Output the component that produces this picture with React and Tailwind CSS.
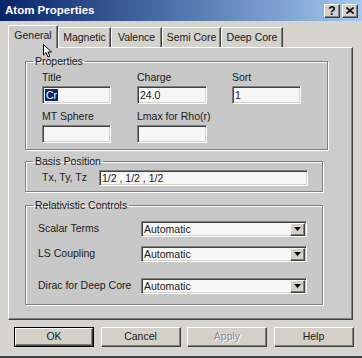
import React from "react";

const sunken =
  "border-t border-l border-t-[#808080] border-l-[#808080] border-b border-r border-b-white border-r-white shadow-[inset_1px_1px_0_#404040,inset_-1px_-1px_0_#d4d0c8]";
const raised =
  "border-t border-l border-t-white border-l-white border-b border-r border-b-[#404040] border-r-[#404040] shadow-[inset_-1px_-1px_0_#808080]";
const etched =
  "border border-[#808080] shadow-[1px_1px_0_#fff,inset_1px_1px_0_#fff]";

const tabs = [
  { label: "General", w: "w-[50px]", active: true },
  { label: "Magnetic", w: "w-[53px]" },
  { label: "Valence", w: "w-[51px]" },
  { label: "Semi Core", w: "w-[59px]" },
  { label: "Deep Core", w: "w-[62px]" },
];

function TextBox({ value, className = "", selected = false }) {
  return (
    <div className={`${sunken} bg-[#f6f6f6] flex items-center pl-[2px] ${className}`}>
      {selected ? (
        <span className="bg-[#0a246a] text-white leading-[12px] px-[1px]">{value}</span>
      ) : (
        <span className="leading-[12px]">{value}</span>
      )}
    </div>
  );
}

function Combo({ value }) {
  return (
    <div className={`${sunken} bg-[#f6f6f6] w-[166px] h-[16px] flex items-center justify-between pl-[2px] pr-[1px]`}>
      <span className="leading-[12px]">{value}</span>
      <div className={`${raised} bg-[#d4d0c8] w-[15px] h-[13px] flex items-center justify-center`}>
        <svg width="7" height="4" viewBox="0 0 7 4">
          <path d="M0 0h7L3.5 4z" fill="#000" />
        </svg>
      </div>
    </div>
  );
}

function Group({ title, className = "", children }) {
  return (
    <fieldset className={`${etched} ml-[16px] w-[298px] bg-[#c8c8c8] ${className}`}>
      <legend className="ml-[7px] px-[2px] leading-[13px]">{title}</legend>
      {children}
    </fieldset>
  );
}

function Button({ label, isDefault = false, disabled = false }) {
  const inner = (
    <div
      className={`${raised} bg-[#d4d0c8] h-full flex items-center justify-center ${
        disabled ? "text-[#8a8a8a] [text-shadow:1px_1px_0_#fff]" : "text-[#1a1a1a]"
      }`}
    >
      {label}
    </div>
  );
  return isDefault ? (
    <div className="w-[80px] h-[20px] border border-black">{inner}</div>
  ) : (
    <div className="w-[80px] h-[20px]">{inner}</div>
  );
}

export default function App() {
  return (
    <div
      className="relative w-[362px] h-[358px] overflow-hidden bg-[#d6d4cf] text-[10.5px] text-[#1a1a1a] flex flex-col border-b-2 border-[#404040]"
      style={{ fontFamily: '"Liberation Sans", Arial, sans-serif' }}
    >
      <div className="h-[21px] flex items-center justify-between pl-[5px] pr-[4px] bg-gradient-to-r from-[#0a246a] to-[#a6caf0]">
        <span className="text-white font-bold text-[11.5px]">Atom Properties</span>
        <div className="flex gap-[2px]">
          <div className={`${raised} bg-[#d4d0c8] w-[16px] h-[14px] flex items-center justify-center font-bold text-[12px] leading-none text-black`}>
            ?
          </div>
          <div className={`${raised} bg-[#d4d0c8] w-[16px] h-[14px] flex items-center justify-center`}>
            <svg width="8" height="7" viewBox="0 0 8 7">
              <path d="M0.5 0.5L7.5 6.5M7.5 0.5L0.5 6.5" stroke="#000" strokeWidth="1.6" />
            </svg>
          </div>
        </div>
      </div>

      <div className="pl-[8px] pt-[4px]">
        <div className="flex items-end h-[22px]">
          {tabs.map((t) =>
            t.active ? (
              <div
                key={t.label}
                className={`${t.w} h-[23px] -mb-px relative z-10 bg-[#cccccc] border-t border-l border-white border-r border-r-[#404040] shadow-[inset_-1px_0_0_#808080] rounded-tl-[2px] flex items-center justify-center pb-[2px]`}
              >
                {t.label}
              </div>
            ) : (
              <div
                key={t.label}
                className={`${t.w} h-[20px] bg-[#d4d2cc] border-t border-l border-white border-r border-r-[#404040] shadow-[inset_-1px_0_0_#808080] rounded-tl-[2px] flex items-center justify-center`}
              >
                {t.label}
              </div>
            )
          )}
        </div>

        <div className="w-[345px] h-[273px] bg-[#cccccc] border-t border-l border-white border-r border-b border-r-[#404040] border-b-[#404040] shadow-[inset_-1px_-1px_0_#808080] pt-[7px]">
          <Group title="Properties">
            <div className="grid grid-cols-[95px_95px_95px] pl-[16px] pt-[3px] pb-[6px]">
              <div className="leading-[13px]">Title</div>
              <div className="leading-[13px]">Charge</div>
              <div className="leading-[13px]">Sort</div>
              <TextBox value="Cr" selected className="w-[69px] h-[18px] mt-[2px]" />
              <TextBox value="24.0" className="w-[70px] h-[18px] mt-[2px]" />
              <TextBox value="1" className="w-[69px] h-[18px] mt-[2px]" />
              <div className="leading-[13px] mt-[6px]">MT Sphere</div>
              <div className="leading-[13px] mt-[6px]">Lmax for Rho(r)</div>
              <div />
              <TextBox value="" className="w-[69px] h-[18px] mt-[2px]" />
              <TextBox value="" className="w-[70px] h-[18px] mt-[2px]" />
            </div>
          </Group>

          <Group title="Basis Position" className="mt-[5px]">
            <div className="flex items-center pl-[16px] pt-[2px] pb-[5px]">
              <span className="w-[57px]">Tx, Ty, Tz</span>
              <TextBox value="1/2 , 1/2 , 1/2" className="w-[209px] h-[16px]" />
            </div>
          </Group>

          <Group title="Relativistic Controls" className="mt-[7px]">
            <div className="flex flex-col pl-[12px] pt-[9px] pb-[10px]">
              <div className="flex items-center">
                <span className="w-[103px]">Scalar Terms</span>
                <Combo value="Automatic" />
              </div>
              <div className="flex items-center mt-[9px]">
                <span className="w-[103px]">LS Coupling</span>
                <Combo value="Automatic" />
              </div>
              <div className="flex items-center mt-[16px]">
                <span className="w-[103px]">Dirac for Deep Core</span>
                <Combo value="Automatic" />
              </div>
            </div>
          </Group>
        </div>
      </div>

      <div className="flex gap-[6.5px] pl-[14px] mt-[7px]">
        <Button label="OK" isDefault />
        <Button label="Cancel" />
        <Button label="Apply" disabled />
        <Button label="Help" />
      </div>

      <svg
        className="absolute left-[43px] top-[44px] z-20"
        width="11"
        height="14"
        viewBox="0 0 11 14"
      >
        <path d="M0.5 0.5V11L3 8.6L5 13L6.8 12.2L4.9 8H8.5Z" fill="#fff" stroke="#000" strokeWidth="1" />
      </svg>
    </div>
  );
}
